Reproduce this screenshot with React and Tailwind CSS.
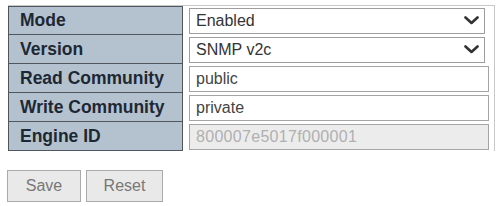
import React from 'react';

const font = { fontFamily: '"Liberation Sans", Arial, sans-serif' };

const Chevron = () => (
  <svg width="15" height="9" viewBox="0 0 15 9" className="shrink-0">
    <path d="M1.5 1.5 L7.5 7 L13.5 1.5" fill="none" stroke="#333" strokeWidth="2.6" strokeLinecap="round" strokeLinejoin="round" />
  </svg>
);

const Select = ({ value }) => (
  <div className="flex h-[26px] w-[296px] items-center justify-between border border-[#9e9e9e] bg-white pl-[6px] pr-[5px] text-[16px] text-[#333]">
    <span>{value}</span>
    <Chevron />
  </div>
);

const Input = ({ value, disabled }) => (
  <div className={`flex h-[26px] w-[300px] items-center border border-[#a5a5a5] pl-[6px] text-[16px] ${disabled ? 'bg-[#ececec] text-[#b0b0b0] tracking-[0.3px]' : 'bg-white text-[#444]'}`}>
    {value}
  </div>
);

const rows = [
  ['Mode', <Select value="Enabled" />],
  ['Version', <Select value="SNMP v2c" />],
  ['Read Community', <Input value="public" />],
  ['Write Community', <Input value="private" />],
  ['Engine ID', <Input value="800007e5017f000001" disabled />],
];

export default function App() {
  return (
    <div className="h-[206px] w-[504px] bg-white pl-[8px] pt-[5px]" style={font}>
      <div className="w-[487px] border-t border-r border-[#c8c8c8]">
        {rows.map(([label, control], i) => (
          <div key={label} className="flex h-[29px]">
            <div className={`flex w-[175px] items-center border-l border-r border-b border-[#4f565e] bg-[#b4c2d0] pl-[11px] text-[17.5px] font-bold text-[#1e2833] ${i === 0 ? 'border-t' : ''}`}>
              {label}
            </div>
            <div className="flex flex-1 items-center pl-[6px]">{control}</div>
          </div>
        ))}
      </div>
      <div className="mt-[19px] -ml-[1px] flex gap-[5px]">
        <button className="h-[32px] w-[74px] border border-[#aaa] bg-[#e9e9e9] text-[16px] text-[#777]">Save</button>
        <button className="h-[32px] w-[77px] border border-[#aaa] bg-[#e9e9e9] text-[16px] text-[#777]">Reset</button>
      </div>
    </div>
  );
}
